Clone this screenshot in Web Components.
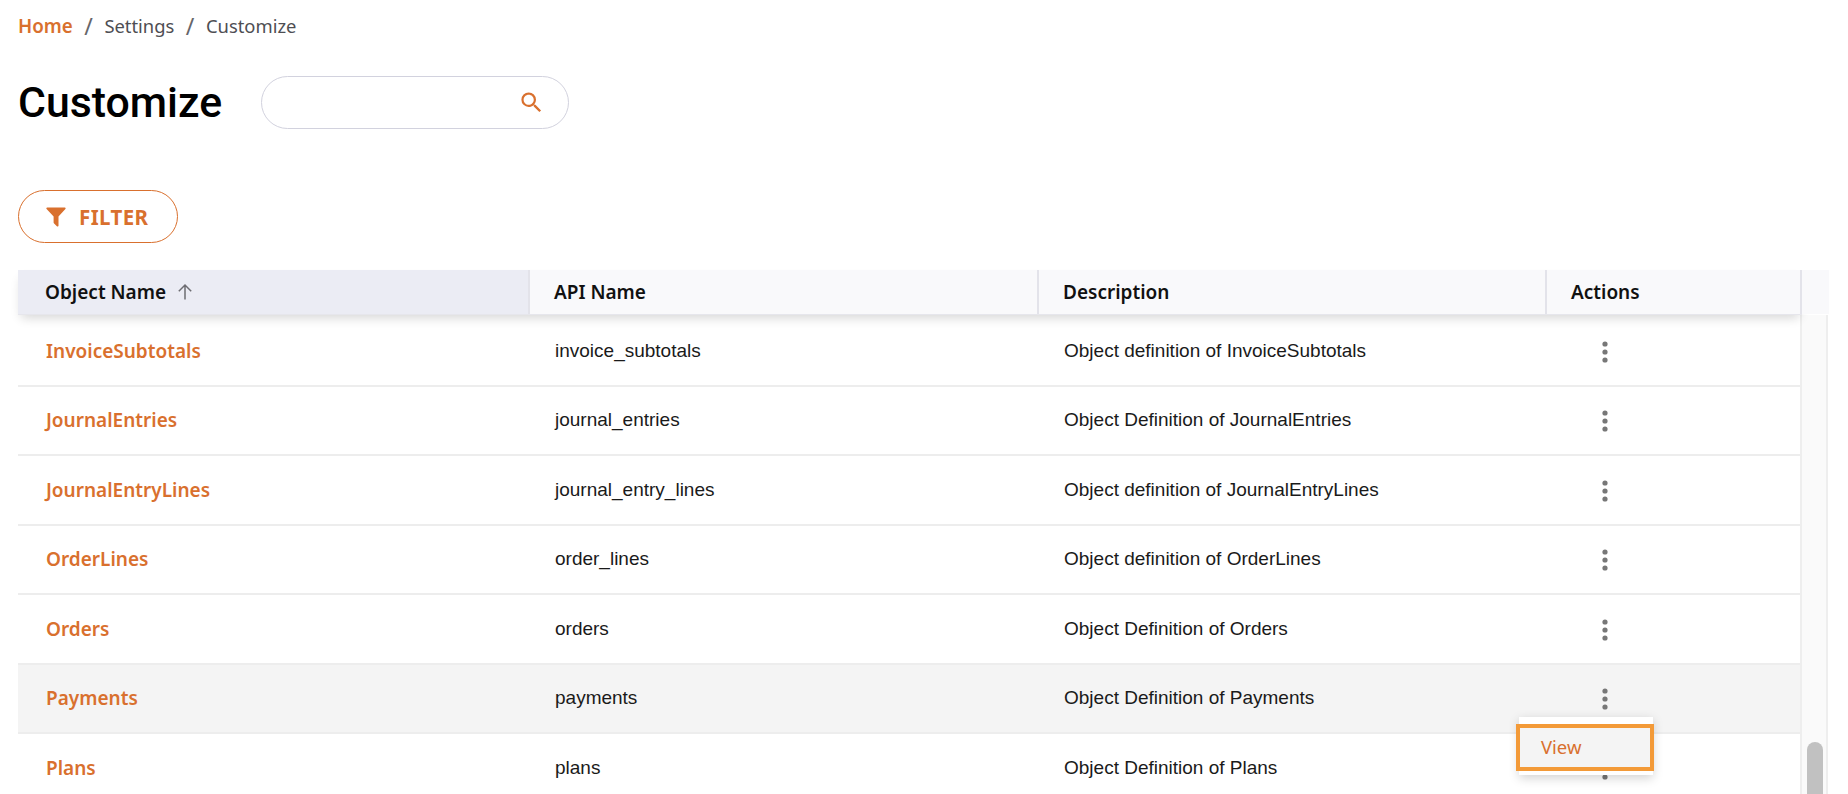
<!DOCTYPE html>
<html>
<head>
<meta charset="utf-8">
<title>Customize</title>
<style>
  html, body { margin: 0; height: 100%; overflow: hidden; background: #fff; }
  body { font-family: "Noto Sans", sans-serif; }
</style>
</head>
<body>
<customize-page></customize-page>

<script>
const accent = "#d9702e";
const columns = "511px 509px 508px 254px";
const headColumns = "512px 509px 508px 255px";

class AppBreadcrumb extends HTMLElement {
  constructor() {
    super();
    this.attachShadow({mode: "open"}).innerHTML = `
      <style>
        :host { display: flex; align-items: center; height: 51px; font: 18.4px "Noto Sans", sans-serif; color: #4e4e53; }
        .home { color: ${accent}; font-weight: 600; font-size: 18.8px; }
        .sep { margin: 0 11.5px; font-size: 23px; color: #66666a; }
      </style>
      <span class="home">Home</span><span class="sep">/</span><span>Settings</span><span class="sep">/</span><span>Customize</span>
    `;
  }
}

class SearchBox extends HTMLElement {
  constructor() {
    super();
    this.attachShadow({mode: "open"}).innerHTML = `
      <style>
        :host { display: flex; align-items: center; justify-content: flex-end; box-sizing: border-box; width: 308px; height: 53px;
          border: 1px solid #d2d2de; border-radius: 27px; padding-right: 23px; }
        svg { width: 27px; height: 27px; fill: ${accent}; }
      </style>
      <svg viewBox="0 0 24 24"><path d="M15.5 14h-.79l-.28-.27A6.47 6.47 0 0 0 16 9.5 6.5 6.5 0 1 0 9.5 16c1.61 0 3.09-.59 4.23-1.57l.27.28v.79l5 4.99L20.49 19l-4.99-5zm-6 0C7.01 14 5 11.99 5 9.5S7.01 5 9.5 5 14 7.01 14 9.5 11.99 14 9.5 14z"/></svg>
    `;
  }
}

class FilterButton extends HTMLElement {
  constructor() {
    super();
    this.attachShadow({mode: "open"}).innerHTML = `
      <style>
        :host { display: inline-flex; align-items: center; box-sizing: border-box; width: 160px; height: 53px; padding-left: 27px;
          border: 1px solid ${accent}; border-radius: 27px; color: ${accent}; font: 700 20.5px "Noto Sans", sans-serif; letter-spacing: .4px; }
        svg { width: 20px; height: 22px; fill: ${accent}; margin-right: 13px; }
      </style>
      <svg viewBox="0 0 20 22"><path d="M1.2 1.5h17.6c.8 0 1.1.9.6 1.5L12.5 10.4v9.4c0 .7-.8 1.1-1.4.6l-3-3c-.3-.2-.5-.5-.5-.8v-6.2L.6 3C.1 2.4.4 1.5 1.2 1.5z"/></svg><slot></slot>
    `;
  }
}

class HeaderCell extends HTMLElement {
  constructor() {
    super();
    this.attachShadow({mode: "open"}).innerHTML = `
      <style>
        :host { display: flex; align-items: center; box-sizing: border-box; padding-left: 24px; border-right: 2px solid #e3e3ea; font: 600 19px "Noto Sans", sans-serif; color: #111; }
        :host([sorted]) { background: #ebecf4; padding-left: 27px; }
        svg { width: 20px; height: 20px; margin-left: 9px; stroke: #6d6d72; stroke-width: 1.5; fill: none; display: none; }
        :host([sorted]) svg { display: block; }
      </style>
      <slot></slot><svg viewBox="0 0 20 20"><path d="M10 17.5V3M3.8 9.2 10 3l6.2 6.2"/></svg>
    `;
  }
}

class TableRow extends HTMLElement {
  constructor() {
    super();
    const root = this.attachShadow({mode: "open"});
    root.innerHTML = `
      <style>
        :host { display: grid; grid-template-columns: ${columns}; align-items: center; height: 69.5px; box-sizing: border-box; border-bottom: 2px solid #ededed; }
        :host([hover]) { background: #f4f4f4; }
        .name { padding-left: 28px; color: ${accent}; font: 600 19px "Noto Sans", sans-serif; }
        .cell { padding-left: 26px; color: #1a1a1a; font: 19px "Liberation Sans", sans-serif; }
        .dots { padding: 2px 0 0 54px; display: flex; }
        svg { width: 10px; height: 24px; fill: #777; }
      </style>
      <div class="name"></div><div class="cell api"></div><div class="cell desc"></div>
      <div class="dots"><svg viewBox="0 0 10 24"><circle cx="5" cy="4" r="2.6"/><circle cx="5" cy="12" r="2.6"/><circle cx="5" cy="20" r="2.6"/></svg></div>
    `;
    root.querySelector(".name").textContent = this.getAttribute("name");
    root.querySelector(".api").textContent = this.getAttribute("api");
    root.querySelector(".desc").textContent = this.getAttribute("desc");
  }
}

class ActionMenu extends HTMLElement {
  constructor() {
    super();
    this.attachShadow({mode: "open"}).innerHTML = `
      <style>
        :host { position: absolute; left: 1501px; top: 447px; width: 134px; padding: 7px 0 4px; background: #fff; box-shadow: 0 3px 10px rgba(0,0,0,.18); }
        .item { box-sizing: border-box; width: 138px; height: 47px; margin-left: -3px; display: flex; align-items: center; padding: 0 0 2px 21px;
          border: 4px solid #f39a38; background: #f4f4f4; color: ${accent}; font: 18.5px "Noto Sans", sans-serif; }
      </style>
      <div class="item"><slot></slot></div>
    `;
  }
}

class DataTable extends HTMLElement {
  constructor() {
    super();
    this.attachShadow({mode: "open"}).innerHTML = `
      <style>
        :host { display: block; position: relative; width: 1811px; }
        .head { height: 44px; background: #f9f9fb; position: relative; box-shadow: 0 6px 10px -3px rgba(0,0,0,.16); border-bottom: 1px solid #e6e6ec; width: 1784px; }
        .cols { display: grid; grid-template-columns: ${headColumns}; height: 44px; }
        .band { position: absolute; left: 1784px; top: 0; width: 27px; height: 44px; background: #f9f9fb; }
        .body { display: flex; }
        .rows { width: 1782px; padding-top: 2px; }
        .bar { box-sizing: border-box; width: 28px; height: 480px; background: #fafafa; border-left: 2px solid #eee; border-right: 2px solid #eee; padding: 427px 3px 0 5px; }
        .thumb { height: 100px; background: #c1c1c1; border-radius: 8px; }
      </style>
      <div class="head"><div class="cols"><slot name="head"></slot></div><div class="band"></div></div>
      <div class="body">
        <div class="rows"><slot></slot></div>
        <div class="bar"><div class="thumb"></div></div>
      </div>
      <slot name="menu"></slot>
    `;
  }
}

class CustomizePage extends HTMLElement {
  constructor() {
    super();
    this.attachShadow({mode: "open"}).innerHTML = `
      <style>
        :host { display: block; height: 794px; overflow: hidden; padding-left: 18px; }
        .title-row { display: flex; align-items: center; height: 53px; margin-top: 25px; gap: 38.5px; }
        h1 { margin: 0 0 2px; font: 500 42.8px Roboto, sans-serif; color: #000; }
        .filter-row { margin-top: 61px; height: 53px; }
        data-table { margin-top: 27px; }
      </style>
      <app-breadcrumb></app-breadcrumb>
      <div class="title-row"><h1>Customize</h1><search-box></search-box></div>
      <div class="filter-row"><filter-button>FILTER</filter-button></div>
      <data-table>
        <header-cell slot="head" sorted>Object Name</header-cell>
        <header-cell slot="head">API Name</header-cell>
        <header-cell slot="head">Description</header-cell>
        <header-cell slot="head">Actions</header-cell>
        <table-row name="InvoiceSubtotals" api="invoice_subtotals" desc="Object definition of InvoiceSubtotals"></table-row>
        <table-row name="JournalEntries" api="journal_entries" desc="Object Definition of JournalEntries"></table-row>
        <table-row name="JournalEntryLines" api="journal_entry_lines" desc="Object definition of JournalEntryLines"></table-row>
        <table-row name="OrderLines" api="order_lines" desc="Object definition of OrderLines"></table-row>
        <table-row name="Orders" api="orders" desc="Object Definition of Orders"></table-row>
        <table-row name="Payments" api="payments" desc="Object Definition of Payments" hover></table-row>
        <table-row name="Plans" api="plans" desc="Object Definition of Plans"></table-row>
        <action-menu slot="menu">View</action-menu>
      </data-table>
    `;
  }
}

customElements.define("app-breadcrumb", AppBreadcrumb);
customElements.define("search-box", SearchBox);
customElements.define("filter-button", FilterButton);
customElements.define("header-cell", HeaderCell);
customElements.define("table-row", TableRow);
customElements.define("action-menu", ActionMenu);
customElements.define("data-table", DataTable);
customElements.define("customize-page", CustomizePage);
</script>
</body>
</html>
